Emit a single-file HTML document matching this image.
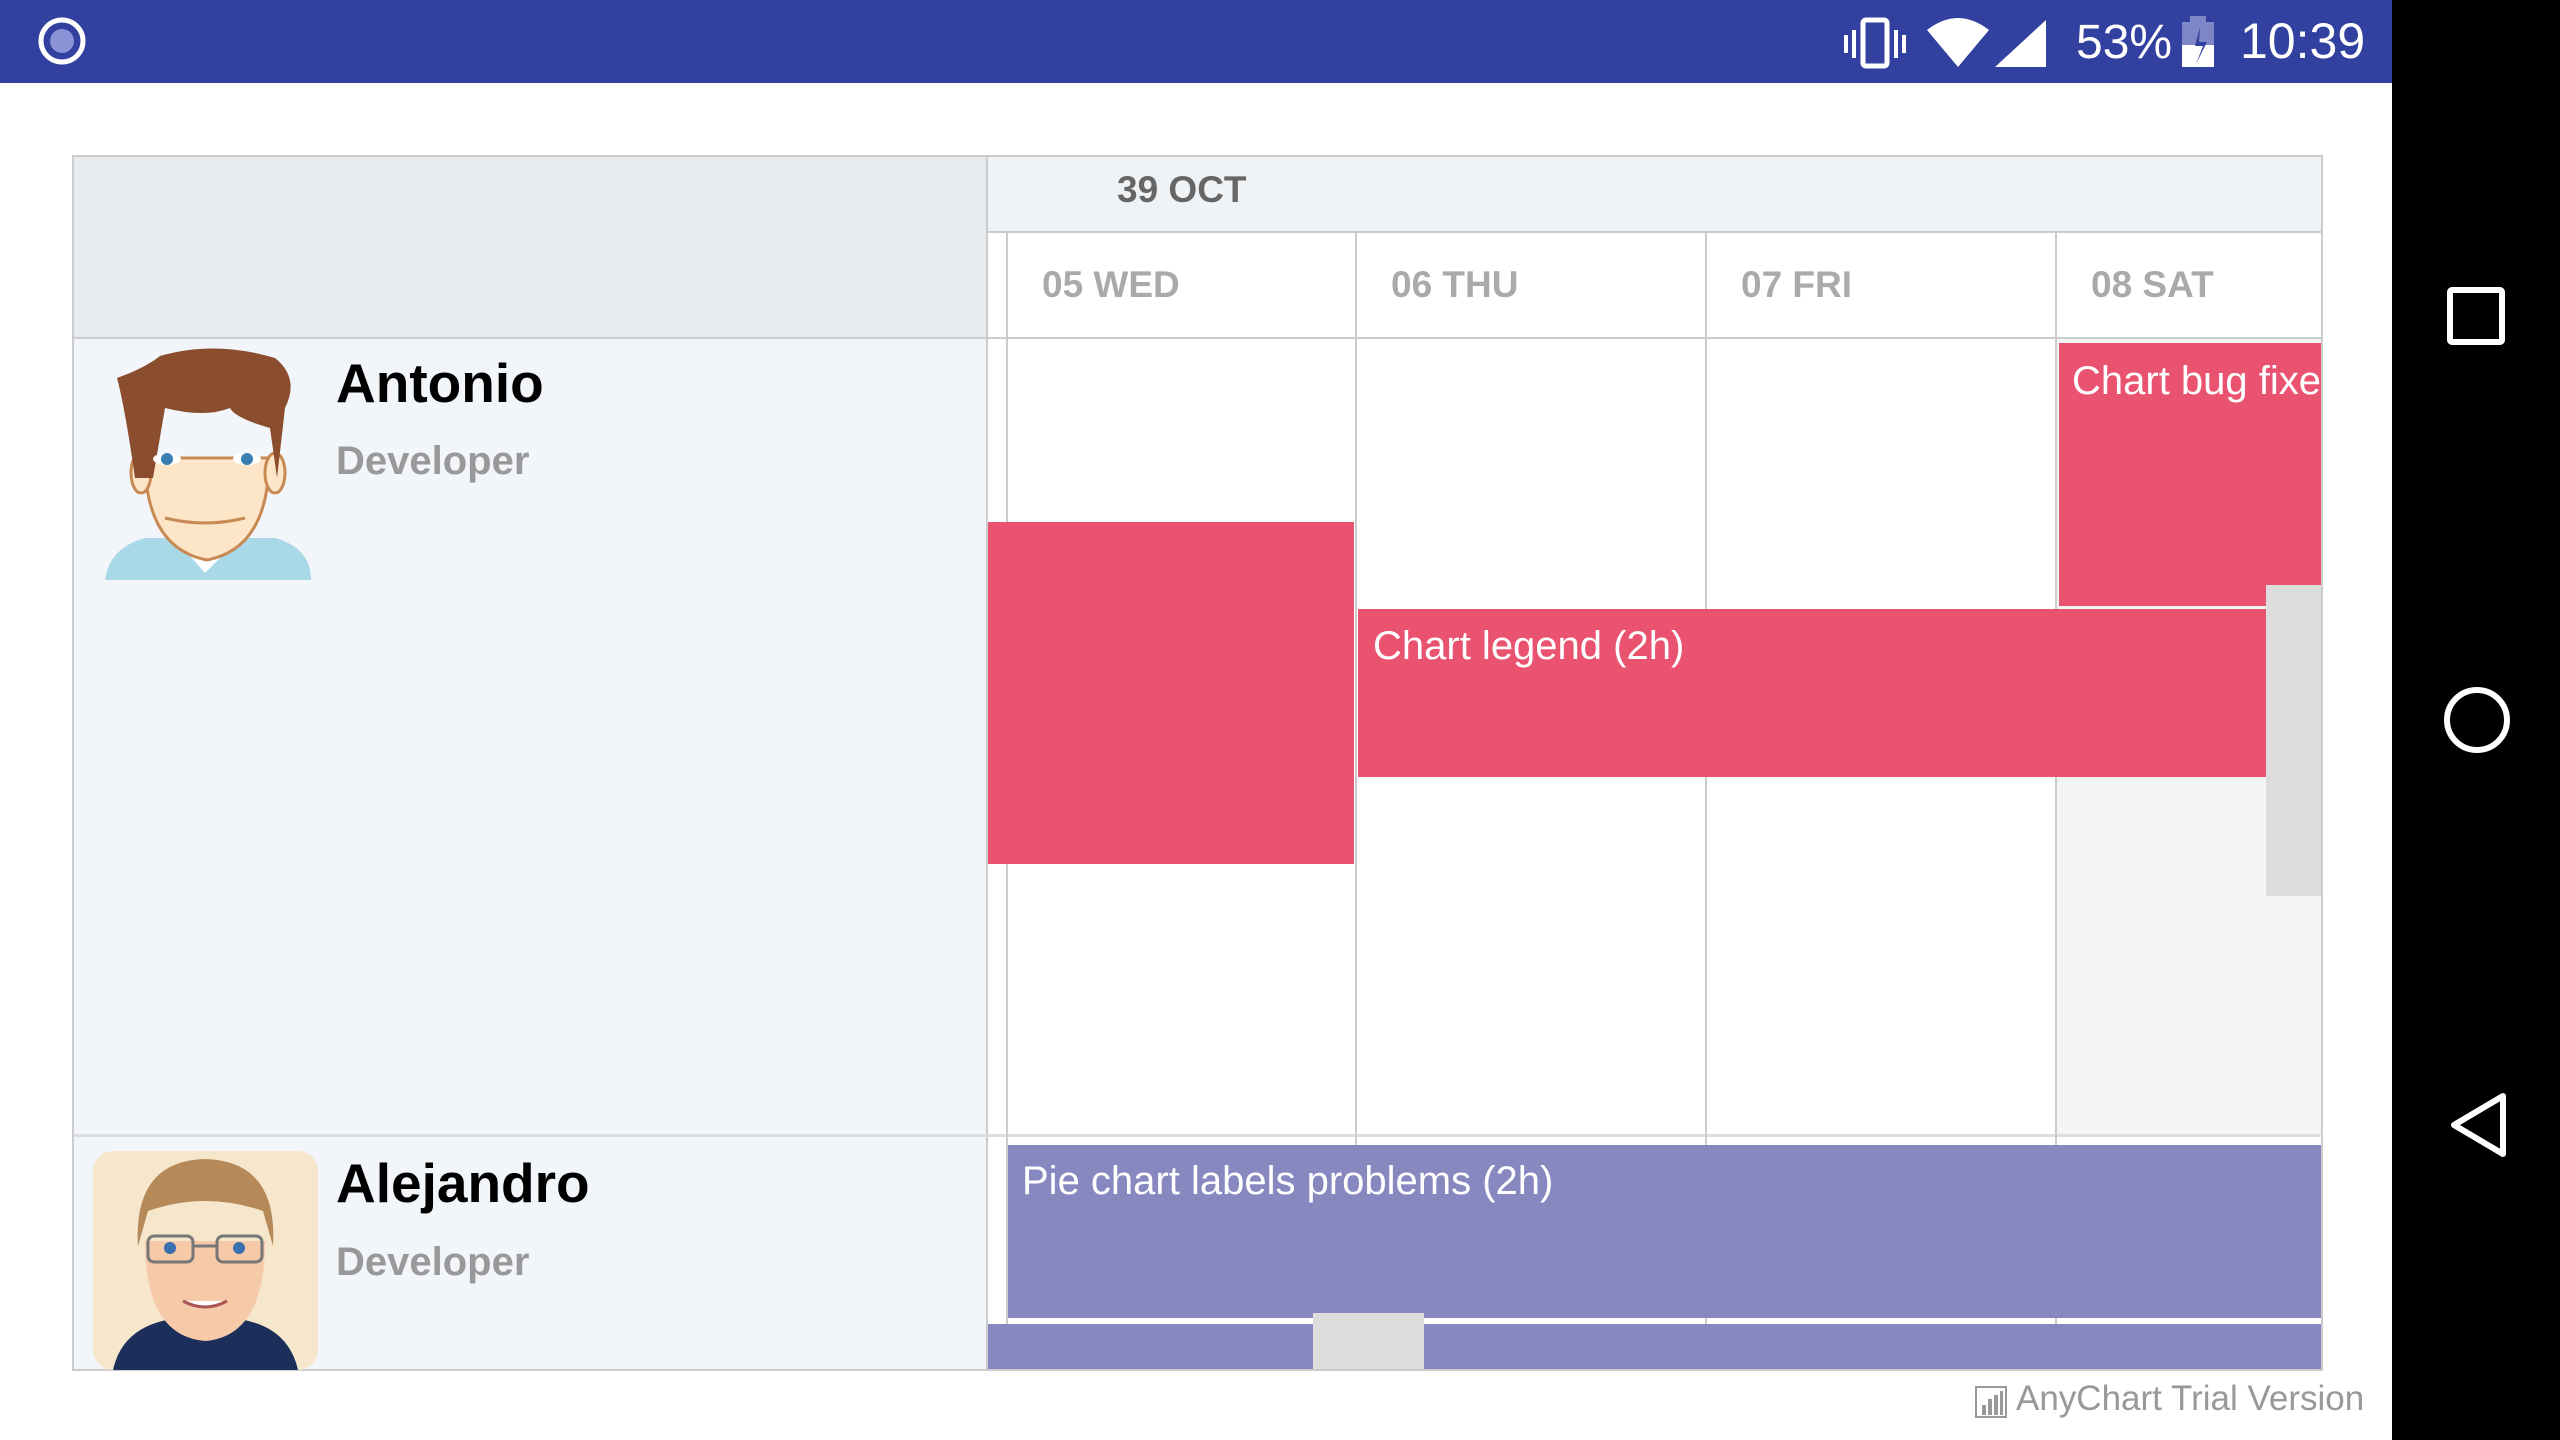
<!DOCTYPE html>
<html><head><meta charset="utf-8"><style>
*{margin:0;padding:0;box-sizing:border-box}
body{width:2560px;height:1440px;position:relative;background:#fff;overflow:hidden;font-family:"Liberation Sans",sans-serif}
.a{position:absolute}
.t{position:absolute;white-space:nowrap;line-height:1}
</style></head><body>
<div class="a" style="left:0;top:0;width:2392px;height:83px;background:#3240a0"></div>
<div class="a" style="left:2392px;top:0;width:168px;height:1440px;background:#000"></div>
<svg class="a" style="left:0;top:0" width="2392" height="83">
<circle cx="62" cy="41" r="21" fill="none" stroke="#fff" stroke-width="5"/><circle cx="62" cy="41" r="12" fill="#8a93d6"/>
<g fill="#fff"><rect x="1844" y="35" width="4" height="18"/><rect x="1902" y="35" width="4" height="18"/><rect x="1852" y="30" width="4" height="28"/><rect x="1894" y="30" width="4" height="28"/>
<rect x="1863" y="20" width="24" height="46" rx="3" fill="none" stroke="#fff" stroke-width="5"/>
<path d="M1927 30 Q1958 6 1989 30 L1958 67 Z"/><path d="M1995 67 L2046 20 L2046 67 Z"/>
<rect x="2182" y="22" width="32" height="45" fill="#7d86c6"/><rect x="2190" y="16" width="16" height="6" fill="#7d86c6"/><rect x="2182" y="45" width="32" height="22"/>
</g>
<path d="M2200 27 L2195 46 L2203 46 L2196 64 L2207 42 L2199 42 Z" fill="#3240a0"/>
<text x="2076" y="58" font-size="48" fill="#fff" font-family="Liberation Sans">53%</text>
<text x="2240" y="58" font-size="50" fill="#fff" font-family="Liberation Sans">10:39</text>
</svg>
<svg class="a" style="left:2392px;top:0" width="168" height="1440" fill="none" stroke="#fff" stroke-width="6">
<rect x="58" y="290" width="52" height="52" rx="2"/><circle cx="85" cy="720" r="30"/><path d="M111 1096 L111 1154 L62 1125 Z" stroke-linejoin="round"/>
</svg>

<!-- table -->
<div class="a" style="left:72px;top:155px;width:2251px;height:1216px;border:2px solid #ccc;background:#fff"></div>
<div class="a" style="left:74px;top:157px;width:912px;height:181px;background:#e6ebef"></div>
<div class="a" style="left:74px;top:338px;width:912px;height:1031px;background:#f2f5f9"></div>
<div class="a" style="left:988px;top:157px;width:1333px;height:75px;background:#eff3f6"></div>
<div class="a" style="left:2057px;top:338px;width:264px;height:797px;background:#f5f5f5"></div>
<div class="a" style="left:986px;top:155px;width:2px;height:1215px;background:#ccc"></div>
<div class="a" style="left:988px;top:231px;width:1334px;height:2px;background:#ccc"></div>
<div class="a" style="left:74px;top:337px;width:2248px;height:2px;background:#ccc"></div>
<div class="a" style="left:74px;top:1134px;width:2248px;height:3px;background:#ddd"></div>
<div class="a" style="left:1006px;top:232px;width:2px;height:1138px;background:#ccc"></div>
<div class="a" style="left:1355px;top:232px;width:2px;height:1138px;background:#ccc"></div>
<div class="a" style="left:1705px;top:232px;width:2px;height:1138px;background:#ccc"></div>
<div class="a" style="left:2055px;top:232px;width:2px;height:1138px;background:#ccc"></div>
<div class="t" style="left:1117px;top:171px;font-size:37px;font-weight:bold;color:#666">39 OCT</div>
<div class="t" style="left:1042px;top:266px;font-size:37px;font-weight:bold;color:#aaa">05 WED</div>
<div class="t" style="left:1391px;top:266px;font-size:37px;font-weight:bold;color:#aaa">06 THU</div>
<div class="t" style="left:1741px;top:266px;font-size:37px;font-weight:bold;color:#aaa">07 FRI</div>
<div class="t" style="left:2091px;top:266px;font-size:37px;font-weight:bold;color:#aaa">08 SAT</div>

<!-- bars -->
<div class="a" style="left:988px;top:522px;width:366px;height:342px;background:#ea5370"></div>
<div class="a" style="left:1358px;top:609px;width:908px;height:168px;background:#ea5370"></div>
<div class="t" style="left:1373px;top:626px;font-size:40px;color:#fff">Chart legend (2h)</div>
<div class="a" style="left:2059px;top:343px;width:262px;height:263px;background:#ea5370;overflow:hidden"><div class="t" style="left:13px;top:18px;font-size:40px;color:#fff">Chart bug fixes</div></div>
<div class="a" style="left:2266px;top:585px;width:55px;height:311px;background:#ddd"></div>
<div class="a" style="left:1008px;top:1145px;width:1313px;height:173px;background:#8888c0"></div>
<div class="t" style="left:1022px;top:1161px;font-size:40px;color:#fff">Pie chart labels problems (2h)</div>
<div class="a" style="left:988px;top:1324px;width:1333px;height:45px;background:#8888c0"></div>
<div class="a" style="left:1313px;top:1313px;width:111px;height:56px;background:#ddd"></div>

<!-- people -->
<div class="t" style="left:336px;top:356px;font-size:55px;font-weight:bold;color:#000">Antonio</div>
<div class="t" style="left:336px;top:441px;font-size:40px;font-weight:bold;color:#999">Developer</div>
<div class="t" style="left:336px;top:1156px;font-size:55px;font-weight:bold;color:#000">Alejandro</div>
<div class="t" style="left:336px;top:1242px;font-size:40px;font-weight:bold;color:#999">Developer</div>

<svg class="a" style="left:105px;top:348px" width="210" height="232" viewBox="0 0 210 232">
<path d="M0 232 Q4 200 40 190 L170 190 Q206 200 206 232 Z" fill="#a9d8e6"/>
<path d="M65 185 L100 225 L140 185 Z" fill="#fff"/>
<path d="M40 110 Q40 200 102 212 Q164 200 164 110 Z" fill="#fde6c8" stroke="#c88a55" stroke-width="3"/>
<ellipse cx="36" cy="125" rx="10" ry="20" fill="#fde6c8" stroke="#c88a55" stroke-width="3"/>
<ellipse cx="170" cy="125" rx="10" ry="20" fill="#fde6c8" stroke="#c88a55" stroke-width="3"/>
<path d="M30 130 Q20 60 12 30 Q40 20 55 8 Q110 -8 170 10 Q195 30 180 60 L172 130 L165 80 Q130 70 125 60 Q100 70 60 60 L48 130 Z" fill="#8a4e2e"/>
<ellipse cx="62" cy="111" rx="14" ry="6" fill="#fff"/><circle cx="62" cy="111" r="6" fill="#3a7fb0"/>
<ellipse cx="142" cy="111" rx="14" ry="6" fill="#fff"/><circle cx="142" cy="111" r="6" fill="#3a7fb0"/>
<path d="M60 170 Q100 180 140 170" stroke="#c88a55" stroke-width="3" fill="none"/>
</svg>
<svg class="a" style="left:93px;top:1151px" width="225" height="219" viewBox="0 0 225 219">
<rect width="225" height="219" rx="20" fill="#f5e6cc"/>
<path d="M20 219 Q30 175 80 168 L145 168 Q195 175 205 219 Z" fill="#1c2e5a"/>
<path d="M52 90 Q52 185 112 190 Q172 185 172 90 Z" fill="#f6c9a8"/>
<path d="M45 95 Q40 10 112 8 Q185 10 180 95 L170 60 Q112 40 55 60 Z" fill="#b58a58"/>
<g fill="none" stroke="#777" stroke-width="3"><rect x="55" y="85" width="45" height="26" rx="6"/><rect x="124" y="85" width="45" height="26" rx="6"/><path d="M100 95 L124 95"/></g>
<circle cx="77" cy="97" r="6" fill="#3a6fb0"/><circle cx="146" cy="97" r="6" fill="#3a6fb0"/>
<path d="M90 150 Q112 162 134 150" stroke="#a55" stroke-width="3" fill="#fff"/>
</svg>

<svg class="a" style="left:1974px;top:1385px" width="34" height="34"><rect x="2" y="2" width="30" height="30" fill="none" stroke="#999" stroke-width="2"/><g fill="#999"><rect x="8" y="20" width="4" height="10"/><rect x="14" y="14" width="4" height="16"/><rect x="20" y="10" width="4" height="20"/><rect x="26" y="6" width="3" height="24"/></g></svg>
<div class="t" style="left:2016px;top:1381px;font-size:35px;color:#999">AnyChart Trial Version</div>
</body></html>
